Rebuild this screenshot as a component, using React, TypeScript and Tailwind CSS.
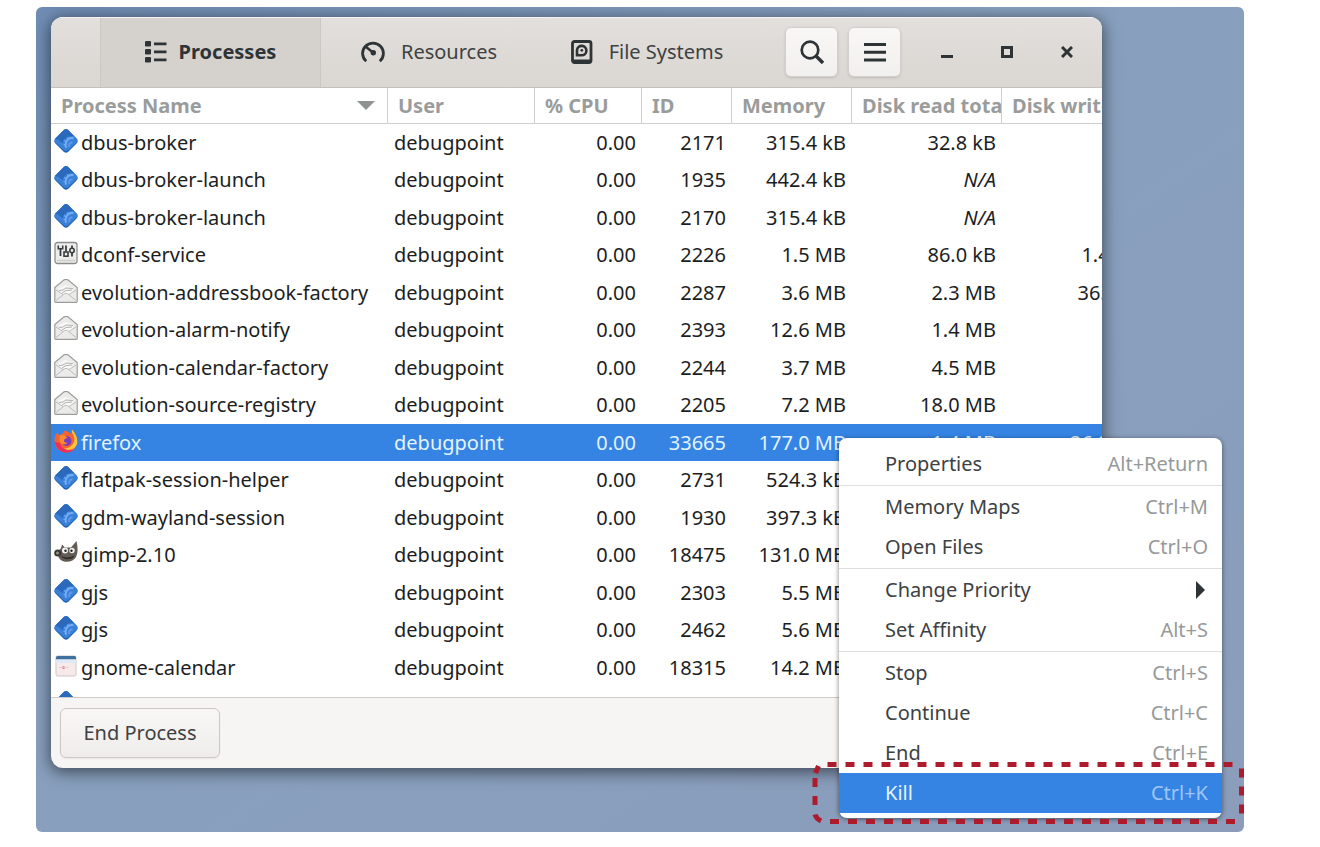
import clsx from "clsx";

type IconName = "generic" | "dconf" | "mail" | "firefox" | "gimp" | "calendar";

type Process = {
  icon: IconName;
  name: string;
  id?: string;
  memory?: string;
  read?: string;
  write?: string;
};

const processes: Process[] = [
  { icon: "generic", name: "dbus-broker", id: "2171", memory: "315.4 kB", read: "32.8 kB" },
  { icon: "generic", name: "dbus-broker-launch", id: "1935", memory: "442.4 kB", read: "N/A" },
  { icon: "generic", name: "dbus-broker-launch", id: "2170", memory: "315.4 kB", read: "N/A" },
  { icon: "dconf", name: "dconf-service", id: "2226", memory: "1.5 MB", read: "86.0 kB", write: "1.4 MB" },
  { icon: "mail", name: "evolution-addressbook-factory", id: "2287", memory: "3.6 MB", read: "2.3 MB", write: "36.9 kB" },
  { icon: "mail", name: "evolution-alarm-notify", id: "2393", memory: "12.6 MB", read: "1.4 MB" },
  { icon: "mail", name: "evolution-calendar-factory", id: "2244", memory: "3.7 MB", read: "4.5 MB" },
  { icon: "mail", name: "evolution-source-registry", id: "2205", memory: "7.2 MB", read: "18.0 MB" },
  { icon: "firefox", name: "firefox", id: "33665", memory: "177.0 MB", read: "1.4 MB", write: "26.2 MB" },
  { icon: "generic", name: "flatpak-session-helper", id: "2731", memory: "524.3 kB" },
  { icon: "generic", name: "gdm-wayland-session", id: "1930", memory: "397.3 kB" },
  { icon: "gimp", name: "gimp-2.10", id: "18475", memory: "131.0 MB" },
  { icon: "generic", name: "gjs", id: "2303", memory: "5.5 MB" },
  { icon: "generic", name: "gjs", id: "2462", memory: "5.6 MB" },
  { icon: "calendar", name: "gnome-calendar", id: "18315", memory: "14.2 MB" },
  { icon: "generic", name: "" },
];

const menuGroups = [
  [{ label: "Properties", keys: "Alt+Return" }],
  [
    { label: "Memory Maps", keys: "Ctrl+M" },
    { label: "Open Files", keys: "Ctrl+O" },
  ],
  [
    { label: "Change Priority", keys: "" },
    { label: "Set Affinity", keys: "Alt+S" },
  ],
  [
    { label: "Stop", keys: "Ctrl+S" },
    { label: "Continue", keys: "Ctrl+C" },
    { label: "End", keys: "Ctrl+E" },
    { label: "Kill", keys: "Ctrl+K" },
  ],
];

function ProcessIcon({ name }: { name: IconName }) {
  return (
    <svg viewBox="0 0 24 24" className="mb-1 size-6 shrink-0" aria-hidden="true">
      {name === "generic" && (
        <>
          <path d="M10 1.800q2-2 4 0l8.800 8.800q1.600 2 0 3.600L14 23q-2 1.600-4 0L1.200 14.200q-1.600-1.600 0-3.600z" fill="#1f5fb0" />
          <path d="M10 .8q2-1.600 4 0l8.800 8.800q1.600 1.800 0 3.600L14 21.500q-2 1.600-4 0L1.200 13.200q-1.600-1.800 0-3.600z" fill="#3a7fd8" />
          <path d="M10 .8q2-1.600 4 0l6.500 6.700C15 6 10 9 8.500 14L4 10.500.8 10z" fill="#2b69bd" />
          <path d="M19.500 9.300c-5-1.300-9 3-7.500 9.500" fill="none" stroke="#74aef2" strokeWidth="2" />
          <path d="M18.500 13.500c-2.500-.5-4 1.500-3.200 4.500" fill="none" stroke="#5b9bee" strokeWidth="2" />
          <path d="m10 11.500 2 1.200M9.500 15.500h2.500M13.500 8.500l1 2" stroke="#74aef2" strokeWidth="1.200" />
        </>
      )}
      {name === "dconf" && (
        <>
          <rect x="1" y="1.500" width="22" height="21" rx="2.500" fill="#ececea" stroke="#8b8d8c" strokeWidth="1.300" />
          <path d="M6.500 8v7M12 4.500v6M18 4.500v3M18 12v3.500" stroke="#3a3d3e" strokeWidth="1.800" />
          <path d="M4.300 4.500v3.300h4.400V4.500" fill="none" stroke="#3a3d3e" strokeWidth="1.600" />
          <rect x="10" y="11" width="4" height="4.200" fill="none" stroke="#3a3d3e" strokeWidth="1.600" />
          <circle cx="18" cy="9.500" r="2.200" fill="none" stroke="#3a3d3e" strokeWidth="1.600" />
          <path d="M3 19.500h18" stroke="#cfcfcd" strokeWidth="1.500" />
        </>
      )}
      {name === "mail" && (
        <>
          <path d="M.8 8.500 9.500 1.200q2.500-1.600 5 0l8.700 7.300V22.500q0 .8-.8.800H1.600q-.8 0-.8-.8z" fill="#ebebe9" stroke="#9c9e9c" strokeWidth="1.200" />
          <path d="m4.500 9.500 7-3.500 8 3-1.500 5.500-6 1.500-6-2z" fill="#f8f8f7" />
          <path d="m5 11.500 4-.5 3-2 7 .5M8 14l4-2.500 6-.5" fill="none" stroke="#b0b2b0" strokeWidth="1" />
          <path d="m2 21.500 8-6.500q2-1.300 4 0l8 6.500M2 11l7 4.500M22 11l-7 4.500" fill="none" stroke="#bcbebc" strokeWidth="1" />
        </>
      )}
      {name === "firefox" && (
        <>
          <path d="M.5 11.500C.5 7.500 2 5 3.700 3c0 1.500.5 2.500 1.500 3.200C8 5.500 9.500 4 10.500 1.500c3 1 5 2 6.500 3.500L18 .5c3 3 5.500 7.500 5 12.500C22.400 19.500 17.800 23.500 12 23.500 5.500 23.500.5 18.500.5 11.500z" fill="#f7612f" />
          <path d="M18 .5c-.5 2.500.3 4 1.500 6 1.500 3 1.200 6-1 9-2 2.700-5 4-8.500 4C14 22.500 23.300 20.500 23.300 12.500 23.300 8 21 4 18 .5z" fill="#fdc53c" />
          <path d="M.8 13c1 6.500 5.800 10.600 11.700 10.400 3 0 5.200-1 7.200-2.900-6 2-12 0-13.700-6.500z" fill="#e9305f" />
          <circle cx="12.500" cy="12" r="5" fill="#7b3fbd" />
          <path d="M5.500 6.500c3-1 6 0 8 2.500-2 .2-3.200.8-3.500 2.500 0 1.500 1.500 2.500 3.500 2.300-2 2.700-7 1.800-8-1.800z" fill="#fb8a31" />
        </>
      )}
      {name === "gimp" && (
        <>
          <path d="M4 10C6 9 7.500 7 8 3.500l3 3h6L22.500 0C24 7 24 12 22 16c-2 4-7 5.500-12 4.500-3-.7-4.500-2.500-5.500-4.500z" fill="#625c54" />
          <circle cx="3.800" cy="12" r="3.600" fill="#3a3733" />
          <circle cx="3.500" cy="12" r="1.500" fill="#99938a" />
          <circle cx="11" cy="9.500" r="3" fill="#f2f2f0" />
          <circle cx="18" cy="9.500" r="2.700" fill="#f2f2f0" />
          <circle cx="11.500" cy="9.800" r="1.200" fill="#222" />
          <circle cx="17.500" cy="9.800" r="1.200" fill="#222" />
          <path d="M7 15c4 2 9 2 13.500-.5-1 4-10 5.500-13.500.5z" fill="#2e2b28" />
        </>
      )}
      {name === "calendar" && (
        <>
          <rect x="2" y="2" width="20" height="20" rx="1.500" fill="#f6ebea" stroke="#d0c3c6" strokeWidth="1" />
          <path d="M2 3.500Q2 2 3.500 2h17Q22 2 22 3.500V5.500H2z" fill="#3f6f9f" />
          <path d="M2 5.500h20V9H2z" fill="#dfeaf6" />
          <circle cx="9.500" cy="13.500" r="1.500" fill="#e08b92" />
          <path d="M5 13.500h10" stroke="#edc6c8" strokeWidth=".8" />
        </>
      )}
    </svg>
  );
}

function ListIcon() {
  return (
    <svg viewBox="0 0 22 22" className="size-[22px]" fill="#2e3436" aria-hidden="true">
      <rect width="6" height="5.600" rx="1.300" />
      <rect y="8" width="6" height="5.600" rx="1.300" />
      <rect y="16" width="6" height="5.600" rx="1.300" />
      <path d="M9 1.500h12.500v2.700H9zM9 9.500h12.500v2.700H9zM9 17.500h12.500v2.700H9z" />
    </svg>
  );
}

function GaugeIcon() {
  return (
    <svg viewBox="0 0 24 24" className="size-6" fill="none" stroke="#2e3436" aria-hidden="true">
      <path d="M5.200 21.300a10.400 10.400 0 1 1 13.600 0" strokeWidth="2.800" />
      <path d="m4.500 6.500 7.500 6" strokeWidth="2.400" />
      <circle cx="12.300" cy="12.800" r="2.700" fill="#2e3436" stroke="none" />
    </svg>
  );
}

function DriveIcon() {
  return (
    <svg viewBox="0 0 22 24" className="h-6 w-[22px]" fill="none" stroke="#2e3436" aria-hidden="true">
      <rect x="1.500" y="1.500" width="18.500" height="21" rx="2" strokeWidth="2.800" />
      <path d="M2 19.500h18V22H2z" fill="#2e3436" stroke="none" />
      <path d="M6 15.300v-5.100a4.700 4.700 0 1 1 4.700 5.100z" strokeWidth="2.600" />
      <circle cx="10.800" cy="10.300" r="1.400" fill="#2e3436" stroke="none" />
    </svg>
  );
}

function ToolButton({ label, children }: { label: string; children: React.ReactNode }) {
  return (
    <button
      aria-label={label}
      className="flex h-[50px] w-[53px] items-center justify-center rounded-md border border-[#d3cfcb] bg-linear-to-b from-[#f8f7f6] to-[#f1f0ee] shadow-sm"
    >
      {children}
    </button>
  );
}

function HeaderBar() {
  return (
    <header className="flex h-[71px] border-t border-b border-t-[#f5f4f3] border-b-[#c4c0bb] bg-linear-to-b from-[#e2dfdc] to-[#dad6d2]">
      <nav className="flex pl-[49px] text-xl text-[#3d4142]">
        <button className="flex w-[221px] items-center justify-center gap-3 border-x border-[#cbc7c3] bg-[#d5d1cd] pb-[2px] font-bold text-[#2e3436]">
          <ListIcon />
          Processes
        </button>
        <button className="flex w-[216px] items-center justify-center gap-4 pb-[2px]">
          <GaugeIcon />
          Resources
        </button>
        <button className="flex w-[220px] items-center justify-center gap-4 pb-[2px]">
          <DriveIcon />
          File Systems
        </button>
      </nav>
      <div className="ml-auto flex items-center gap-[10px] pr-[5px] pb-[2px]">
        <ToolButton label="Search">
          <svg viewBox="0 0 24 24" className="size-6" fill="none" stroke="#2e3436" strokeWidth="2.700" aria-hidden="true">
            <circle cx="10" cy="10" r="8.300" />
            <path d="m16 16 7 7" strokeWidth="3.400" />
          </svg>
        </ToolButton>
        <ToolButton label="Menu">
          <svg viewBox="0 0 22 20" className="h-5 w-[22px]" fill="#2e3436" aria-hidden="true">
            <path d="M0 1h22v3H0zM0 8.800h22v3H0zM0 16.500h22v3H0z" />
          </svg>
        </ToolButton>
        <div className="flex pl-[6px]">
          <button aria-label="Minimize" className="flex h-12 w-[60px] items-center justify-center">
            <svg viewBox="0 0 12 12" className="size-3">
              <path d="M0 9h12v3H0z" fill="#2e3436" />
            </svg>
          </button>
          <button aria-label="Maximize" className="flex h-12 w-[60px] items-center justify-center">
            <svg viewBox="0 0 12 12" className="size-3">
              <path d="M1.500 1.500h9v9h-9z" fill="none" stroke="#2e3436" strokeWidth="3" />
            </svg>
          </button>
          <button aria-label="Close" className="flex h-12 w-[60px] items-center justify-center">
            <svg viewBox="0 0 12 12" className="size-3">
              <path d="m1 1 10 10M11 1 1 11" stroke="#2e3436" strokeWidth="3" />
            </svg>
          </button>
        </div>
      </div>
    </header>
  );
}

const headCell = "overflow-hidden border-r border-b border-[#d0cecb] pl-[10px] text-left font-bold";
const numCell = "pr-[6px] text-right";

function ProcessTable() {
  return (
    <div className="h-[609px] overflow-hidden bg-white">
      <table className="w-full min-w-[1101px] table-fixed border-separate border-spacing-0 text-xl whitespace-nowrap text-[#1c1e1f]">
        <thead>
          <tr className="h-9 text-[#9a9c9c]">
            <th className={headCell}>
              <div className="flex items-center justify-between pr-3">
                Process Name
                <svg viewBox="0 0 18 9" className="h-[9px] w-[18px]" fill="#8f9293" aria-hidden="true">
                  <path d="M0 0h18L9 9z" />
                </svg>
              </div>
            </th>
            <th className={clsx(headCell, "w-[147px]")}>User</th>
            <th className={clsx(headCell, "w-[107px]")}>% CPU</th>
            <th className={clsx(headCell, "w-[90px]")}>ID</th>
            <th className={clsx(headCell, "w-[120px]")}>Memory</th>
            <th className={clsx(headCell, "w-[150px]")}>Disk read total</th>
            <th className={clsx(headCell, "w-[150px]")}>Disk write tota</th>
          </tr>
        </thead>
        <tbody>
          {processes.map((p, i) => (
            <tr
              key={i}
              className={clsx(
                "odd:h-[37px] even:h-[38px]",
                p.name === "firefox" && "bg-[#3584e4] text-[#e3f3ff]"
              )}
            >
              <td className="pl-[3px]">
                <div className="flex items-center gap-[3px]">
                  <ProcessIcon name={p.icon} />
                  {p.name}
                </div>
              </td>
              <td className="pl-[6px]">{p.id && "debugpoint"}</td>
              <td className={numCell}>{p.id && "0.00"}</td>
              <td className={numCell}>{p.id}</td>
              <td className={numCell}>{p.memory}</td>
              <td className={clsx(numCell, p.read === "N/A" && "italic")}>{p.read}</td>
              <td className={numCell}>{p.write}</td>
            </tr>
          ))}
        </tbody>
      </table>
    </div>
  );
}

function ContextMenu() {
  return (
    <div
      role="menu"
      className="absolute right-[22px] bottom-[14px] w-[383px] rounded-lg bg-white pt-[6px] pb-[5px] text-xl text-[#3d4142] shadow-[0_1px_5px_rgba(0,0,0,0.5)]"
    >
      {menuGroups.map((group, i) => (
        <div key={i} className="group">
          {group.map((item) => (
            <button
              key={item.label}
              role="menuitem"
              className={clsx(
                "flex h-10 w-full items-center justify-between pr-[14px] pl-[46px]",
                item.label === "Kill" && "bg-[#3584e4] text-[#e3f3ff]"
              )}
            >
              {item.label}
              {item.keys ? (
                <span className={item.label === "Kill" ? "text-[#9cc6f5]" : "text-[#96999a]"}>{item.keys}</span>
              ) : (
                <svg viewBox="0 0 12 18" className="h-[18px] w-3" fill="#2e3436" aria-hidden="true">
                  <path d="M0 0v18l9-9z" />
                </svg>
              )}
            </button>
          ))}
          <hr className="my-px border-[#dcdedd] group-last:hidden" />
        </div>
      ))}
    </div>
  );
}

// dashed marker drawn round the last menu entry
function Marker() {
  return (
    <svg
      viewBox="0 0 432 62"
      className="pointer-events-none absolute right-0 bottom-2 h-[62px] w-[432px]"
      fill="none"
      stroke="#ad1c2c"
      strokeWidth="5"
      aria-hidden="true"
    >
      <path d="M15.500 2.500H421" strokeDasharray="9 9" />
      <path d="M18 59.500H423" strokeDasharray="9 9" />
      <path d="M3 16V43" strokeDasharray="9 9" />
      <path d="M429.500 6.500V52" strokeDasharray="9 9" />
      <path d="M3.500 11 6.500 4M3 52.500q1 4 6 6.500" />
    </svg>
  );
}

export default function App() {
  return (
    <main className="bg-white pt-[7px] pr-[76px] pb-[15px] pl-9 font-['Noto_Sans',sans-serif]">
      <div className="relative overflow-hidden rounded-md bg-linear-to-br from-[#6f8cb3] via-[#87a0be] via-40% to-[#8b9dbb] pt-[10px] pr-[142px] pb-16 pl-[15px]">
        <section className="overflow-hidden rounded-xl bg-[#f6f5f4] shadow-[0_3px_16px_1px_rgba(0,0,0,0.55)]">
          <HeaderBar />
          <ProcessTable />
          <footer className="border-t border-[#cfccc8] p-[10px] pl-[9px]">
            <button className="h-[50px] w-[160px] rounded-md border border-[#cdc7c2] bg-linear-to-b from-[#f8f7f6] to-[#efedec] text-xl text-[#3d4142] shadow-xs">
              End Process
            </button>
          </footer>
        </section>
        <ContextMenu />
        <Marker />
      </div>
    </main>
  );
}
